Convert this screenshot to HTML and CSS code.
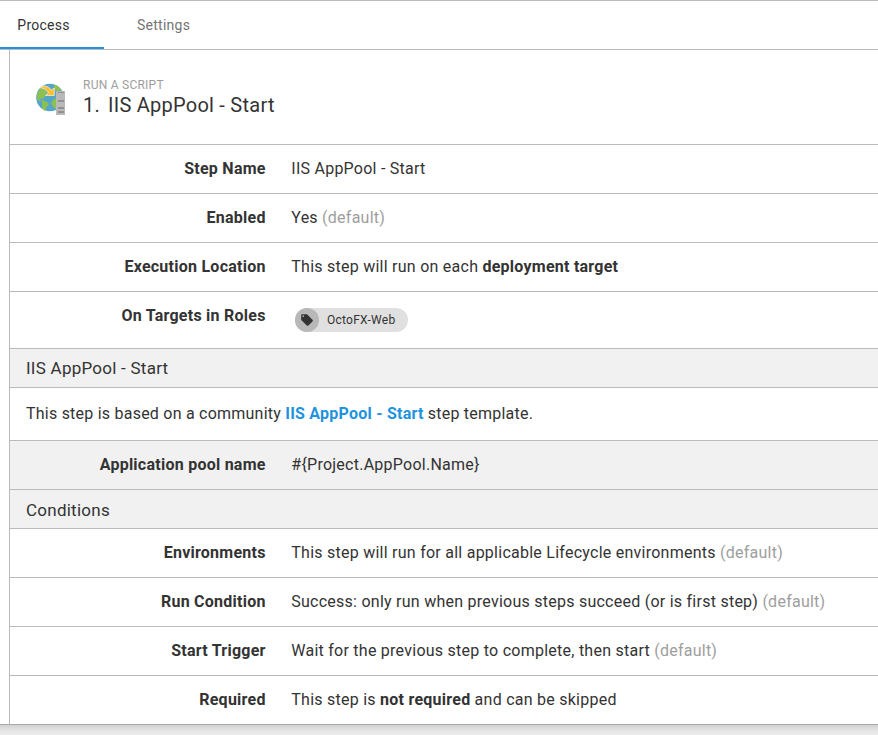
FILE: index.html
```html
<!DOCTYPE html>
<html lang="en">
<head>
<meta charset="utf-8">
<title>IIS AppPool - Start</title>
<link rel="stylesheet" href="styles.css">
</head>
<body>
<main class="paper">
  <nav class="tabs">
    <a class="tab active">Process</a>
    <a class="tab">Settings</a>
  </nav>
  <section class="step">
    <header class="step-header">
      <svg class="step-icon" viewBox="0 0 30 34" width="30" height="34">
        <circle cx="14" cy="14.500" r="13.800" fill="#55a5c8"/>
        <path fill="#8cc152" d="M1 10L5 5L9 7L12 11L9 13L7 16L4 15L5 19L1 16ZM6 17L11 19L13 21L10 25L9 28L6 25ZM18 1.500Q23 3 25.500 7.500L20 8L18 6ZM16 18L20 15V26L17 24L15 20Z"/>
        <path fill="#fec02f" stroke="#fff" stroke-width=".6" d="M3 4.500Q10 .5 15.500 7L18.300 5V12.500H9.500L12.500 10Q9 5 3 4.500Z"/>
        <path fill="#b9b9b9" d="M21 8H29V32H20V9Z"/>
        <path fill="#919191" d="M22 9H28V10H22ZM22 17H28V19H22ZM22 24H28V26H22ZM22 28H28V30H22Z"/>
      </svg>
      <div>
        <div class="step-type">RUN A SCRIPT</div>
        <h1 class="step-title"><span class="number">1.</span>IIS AppPool - Start</h1>
      </div>
    </header>
    <div class="row"><div class="label">Step Name</div><div class="value">IIS AppPool - Start</div></div>
    <div class="row"><div class="label">Enabled</div><div class="value">Yes <span class="muted">(default)</span></div></div>
    <div class="row"><div class="label">Execution Location</div><div class="value">This step will run on each <b>deployment target</b></div></div>
    <div class="row roles"><div class="label">On Targets in Roles</div><div class="value"><span class="chip"><span class="chip-icon"><svg viewBox="0 0 24 24" width="14" height="14"><path fill="#333" fill-rule="evenodd" d="M21.41 11.58l-9-9C12.05 2.22 11.55 2 11 2H4c-1.1 0-2 .9-2 2v7c0 .55.22 1.05.59 1.42l9 9c.36.36.86.58 1.41.58s1.05-.22 1.41-.59l7-7c.37-.36.59-.86.59-1.41s-.23-1.06-.59-1.42zM5.500 7C4.670 7 4 6.330 4 5.500S4.670 4 5.500 4 7 4.670 7 5.500 6.330 7 5.500 7z"/></svg></span>OctoFX-Web</span></div></div>
    <h2 class="heading">IIS AppPool - Start</h2>
    <p class="note">This step is based on a community <a>IIS AppPool - Start</a> step template.</p>
    <div class="row shaded"><div class="label">Application pool name</div><div class="value">#{Project.AppPool.Name}</div></div>
    <h2 class="heading conditions">Conditions</h2>
    <div class="row"><div class="label">Environments</div><div class="value">This step will run for all applicable Lifecycle environments <span class="muted">(default)</span></div></div>
    <div class="row"><div class="label">Run Condition</div><div class="value">Success: only run when previous steps succeed (or is first step) <span class="muted">(default)</span></div></div>
    <div class="row"><div class="label">Start Trigger</div><div class="value">Wait for the previous step to complete, then start <span class="muted">(default)</span></div></div>
    <div class="row last"><div class="label">Required</div><div class="value">This step is <b>not required</b> and can be skipped</div></div>
  </section>
</main>
<div class="below"></div>
</body>
</html>
```
FILE: styles.css
```css
* { box-sizing: border-box; }
html { height: 100%; overflow: hidden; }
body {
  margin: 0;
  height: 735px;
  overflow: hidden;
  background: #eee;
  color: #333;
  font: 16px/24px Roboto, sans-serif;
  letter-spacing: .25px;
}
.paper {
  height: 724px;
  background: #fff;
}
.below {
  height: 11px;
  border-top: 1px solid #aaa;
  background: linear-gradient(#d2d2d2, #e3e3e3 50%, #ececec);
}
.tabs {
  display: flex;
  height: 50px;
  border-top: 1px solid #bbb;
  border-bottom: 1px solid #bbb;
}
.tab {
  height: 48px;
  padding: 0 34px 0 33px;
  font-size: 14px;
  line-height: 49px;
  color: #757575;
}
.tab.active {
  width: 104px;
  padding: 0 0 0 17.3px;
  border-bottom: 2px solid #1f93dd;
  color: #333;
}
.step { margin-left: 9px; border-left: 1px solid #bbb; }
.step-header {
  display: flex;
  height: 95px;
  padding: 27px 0 0 26px;
  border-bottom: 1px solid #bbb;
}
.step-icon { margin: 6px 17px 0 0; }
.step-type { font-size: 12px; line-height: 16px; color: #9e9e9e; }
.step-title { margin: 0; font-size: 20px; font-weight: 400; line-height: 24px; }
.number { margin-right: 8px; }
.row {
  display: grid;
  grid-template-columns: 255.7px 1fr;
  column-gap: 25.6px;
  height: 49px;
  padding-top: 12px;
  border-bottom: 1px solid #bbb;
}
.last { border-bottom: 0; height: 48px; }
.label { font-weight: 700; text-align: right; }
.muted { color: #9e9e9e; }
.roles { height: 57px; }
.chip {
  display: flex;
  width: 113px;
  height: 24px;
  margin: 4px 0 0 3.7px;
  border-radius: 12px;
  background: #e0e0e0;
  font-size: 12px;
}
.chip-icon {
  display: flex;
  align-items: center;
  justify-content: center;
  width: 24px;
  height: 24px;
  margin-right: 8px;
  border-radius: 50%;
  background: #b8b8b8;
}
.heading {
  height: 39px;
  margin: 0;
  padding: 7px 16px 0;
  border-bottom: 1px solid #bbb;
  background: #f1f1f1;
  font-size: 17px;
  font-weight: 400;
  line-height: 24px;
}
.conditions { padding-top: 8px; }
.note { height: 53px; margin: 0; padding: 14px 16px 0; border-bottom: 1px solid #bbb; letter-spacing: .23px; }
.note a { color: #1f93dd; font-weight: 700; }
.shaded { background: #f1f1f1; }
```
